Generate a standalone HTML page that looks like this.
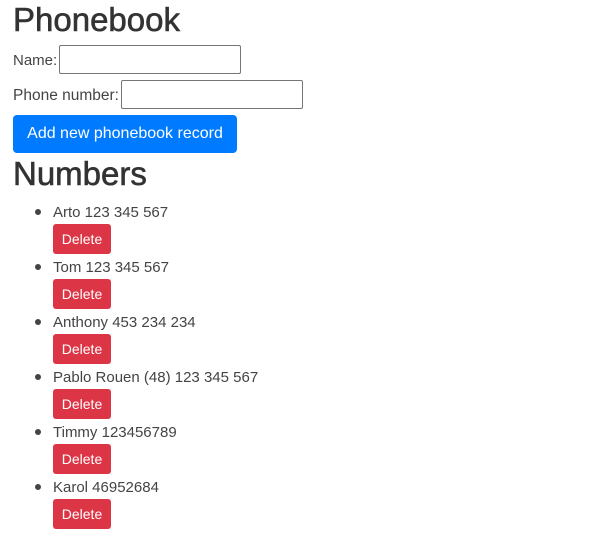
<!DOCTYPE html>
<html><head><style>
body{margin:0;width:592px;height:535px;background:#fff;font-family:"Liberation Sans",sans-serif;color:#444;position:relative;overflow:hidden}
.a{position:absolute;white-space:nowrap}
h1{margin:0;font-weight:normal;font-size:33px;line-height:40px;color:#333;-webkit-text-stroke:0.6px #333}
.in{position:absolute;border:1px solid #767676;border-radius:2px;height:27px;width:180px;box-sizing:content-box}
.btn{position:absolute;background:#007bff;color:#fff;border-radius:4px;font-size:16px;text-align:center;line-height:38px}
.del{position:absolute;left:53px;width:58px;height:30px;background:#dc3545;color:#fff;border-radius:3px;font-size:14px;line-height:30px;text-align:center}
.li{position:absolute;left:53px;font-size:15px;line-height:20px}
.dot{position:absolute;left:35px;width:6px;height:6px;border-radius:50%;background:#444}
</style></head><body>
<h1 class="a" style="left:13px;top:0px">Phonebook</h1>
<div class="a" style="left:13px;top:52px;font-size:15px">Name:</div>
<div class="in" style="left:59px;top:45px"></div>
<div class="a" style="left:13px;top:87px;font-size:15.5px">Phone number:</div>
<div class="in" style="left:121px;top:80px"></div>
<div class="btn" style="left:13px;top:115px;width:224px;height:38px">Add new phonebook record</div>
<h1 class="a" style="left:13px;top:154px">Numbers</h1>

<div class="dot" style="top:209px"></div><div class="li" style="top:203px">Arto 123 345 567</div><div class="del" style="top:224px">Delete</div>
<div class="dot" style="top:264px"></div><div class="li" style="top:258px">Tom 123 345 567</div><div class="del" style="top:279px">Delete</div>
<div class="dot" style="top:319px"></div><div class="li" style="top:313px">Anthony 453 234 234</div><div class="del" style="top:334px">Delete</div>
<div class="dot" style="top:374px"></div><div class="li" style="top:368px">Pablo Rouen (48) 123 345 567</div><div class="del" style="top:389px">Delete</div>
<div class="dot" style="top:429px"></div><div class="li" style="top:423px">Timmy 123456789</div><div class="del" style="top:444px">Delete</div>
<div class="dot" style="top:484px"></div><div class="li" style="top:478px">Karol 46952684</div><div class="del" style="top:499px">Delete</div>
</body></html>
